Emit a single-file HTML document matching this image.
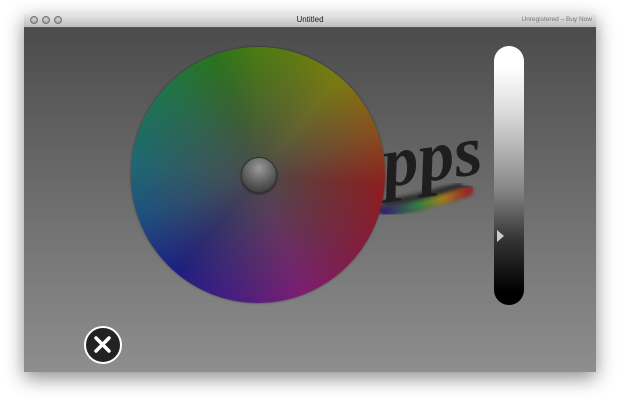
<!DOCTYPE html>
<html><head><style>
body{margin:0;width:620px;height:405px;background:#fff;position:relative;overflow:hidden;font-family:"Liberation Sans",sans-serif}
.win{position:absolute;left:24px;top:14px;width:572px;height:358px;box-shadow:0 6px 18px rgba(0,0,0,.45);}
.tb{position:absolute;left:0;top:0;width:572px;height:13px;background:linear-gradient(#e8e8e8,#bdbdbd);border-bottom:1px solid #555;}
.tb .t{position:absolute;left:0;width:100%;text-align:center;top:1px;font-size:8px;color:#222}
.tb .r{position:absolute;right:4px;top:2px;font-size:6.5px;color:#777}
.dot{position:absolute;top:2px;width:8px;height:8px;border-radius:50%;background:radial-gradient(circle at 50% 40%,#ddd,#888);border:1px solid #777;box-sizing:border-box}
.c{position:absolute;left:0;top:14px;width:572px;height:344px;background:linear-gradient(#4c4c4c,#8e8e8e);}
.wheel{position:absolute;left:131px;top:47px;width:254px;height:256px;border-radius:50%;
background:radial-gradient(circle,rgba(75,75,75,1) 0%,rgba(75,75,75,.6) 35%,rgba(75,75,75,0) 92%),
conic-gradient(from 0deg,#4a8a00,#8a8a00 40deg,#9a5010 70deg,#a01010 95deg,#901040 130deg,#8a1080 160deg,#401090 195deg,#101090 220deg,#105090 250deg,#107080 275deg,#108050 310deg,#208010 340deg,#4a8a00);
box-shadow:0 0 2px rgba(0,0,0,.5);}
.knob{position:absolute;left:241px;top:157px;width:36px;height:36px;border-radius:50%;background:radial-gradient(circle at 50% 30%,#999,#555 60%,#333);box-shadow:0 1px 2px #222;border:1px solid #333;box-sizing:border-box}
.sl{position:absolute;left:494px;top:46px;width:30px;height:259px;border-radius:15px;background:linear-gradient(#fff 8%,#ddd 25%,#888 55%,#333 75%,#000 95%);}
.x{position:absolute;left:84px;top:326px;width:38px;height:38px;border-radius:50%;background:#222;border:2.5px solid #fff;box-sizing:border-box}
</style></head><body>
<div class="win">
<div class="tb"><div class="dot" style="left:6px"></div><div class="dot" style="left:18px"></div><div class="dot" style="left:30px"></div><div class="t">Untitled</div><div class="r">Unregistered – Buy Now</div></div>
<div class="c"></div>
</div>
<svg style="position:absolute;left:360px;top:100px" width="140" height="130">
<defs><linearGradient id="g" x1="0" x2="1"><stop offset="0" stop-color="#302070"/><stop offset=".4" stop-color="#308040"/><stop offset=".7" stop-color="#a08020"/><stop offset="1" stop-color="#a02020"/></linearGradient>
<filter id="b"><feGaussianBlur stdDeviation="2"/></filter></defs>
<path d="M25 110 Q70 100 105 88" stroke="#222" stroke-width="14" fill="none" stroke-linecap="round" opacity=".6" filter="url(#b)"/>
<path d="M25 112 Q70 104 108 90" stroke="url(#g)" stroke-width="11" fill="none" stroke-linecap="round" filter="url(#b)"/>
<path d="M25 103 Q70 95 100 85" stroke="#2a2a2a" stroke-width="5" fill="none" stroke-linecap="round" filter="url(#b)"/>
<text x="22" y="82" font-size="72" font-style="italic" font-weight="bold" fill="#1e1e1e" font-family="Liberation Serif" transform="rotate(-8 60 60)">pps</text>
</svg>
<div class="wheel"></div>
<div class="knob"></div>
<div class="sl"></div>
<div style="position:absolute;left:497px;top:230px;width:0;height:0;border-left:7px solid #ccc;border-top:6px solid transparent;border-bottom:6px solid transparent"></div>
<div class="x"><svg width="33" height="33" style="position:absolute;left:0;top:0"><path d="M10 10L23 23M23 10L10 23" stroke="#fff" stroke-width="3.5" stroke-linecap="round"/></svg></div>
</body></html>
